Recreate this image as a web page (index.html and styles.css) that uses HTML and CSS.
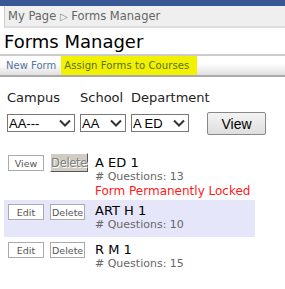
FILE: index.html
```html
<!DOCTYPE html>
<html lang="en">
<head>
    <meta charset="UTF-8">
    <title>Forms Manager</title>
    <link rel="stylesheet" href="styles.css">
</head>
<body>

    <div class="topbar"></div>

    <div class="breadcrumb">
        <a href="#">My Page</a> <span class="sep">&#9655;</span> <a href="#">Forms Manager</a>
    </div>

    <h1 class="title">Forms Manager</h1>

    <div class="tabs">
        <a class="tab" href="#">New Form</a>
        <a class="tab tab-marked" href="#">Assign Forms to Courses</a>
    </div>

    <form class="filters">
        <label for="campus">Campus</label>
        <label for="school">School</label>
        <label for="dept">Department</label>
        <span></span>
        <select id="campus"><option>AA---</option></select>
        <select id="school"><option>AA</option></select>
        <select id="dept"><option>A ED</option></select>
        <button type="button" class="view-btn">View</button>
    </form>

    <table class="forms">
        <tr class="first">
            <td class="actions">
                <button class="small-btn">View</button>
                <button class="locked-btn" disabled>Delete</button>
            </td>
            <td class="info">
                <div class="form-name">A ED 1</div>
                <div class="count"># Questions: 13</div>
                <div class="locked">Form Permanently Locked</div>
            </td>
        </tr>
        <tr class="alt">
            <td class="actions">
                <button class="small-btn">Edit</button>
                <button class="small-btn">Delete</button>
            </td>
            <td class="info">
                <div class="form-name">ART H 1</div>
                <div class="count"># Questions: 10</div>
            </td>
        </tr>
        <tr class="last">
            <td class="actions">
                <button class="small-btn">Edit</button>
                <button class="small-btn">Delete</button>
            </td>
            <td class="info">
                <div class="form-name">R M 1</div>
                <div class="count"># Questions: 15</div>
            </td>
        </tr>
    </table>

</body>
</html>
```

FILE: styles.css
```css
body {
    margin: 0;
    font-family: "DejaVu Sans", Verdana, sans-serif;
    background-color: #fff;
    color: #000;
}

a {
    text-decoration: none;
}

.topbar {
    height: 6px;
    background-color: #3a5795;
}

.breadcrumb {
    margin-left: 4px;
    height: 20px;
    padding-left: 3px;
    border-left: 1px solid #ccc;
    border-bottom: 2px solid #ddd;
    background-color: #efefef;
    font-size: 11.5px;
    line-height: 21px;
    color: #777;
}

.breadcrumb a {
    color: #666;
}

.sep {
    font-size: 10px;
    color: #888;
}

.title {
    margin: 2px 0 0 4px;
    height: 24px;
    font-size: 18px;
    font-weight: normal;
    line-height: 24px;
}

.tabs {
    display: flex;
    height: 19px;
    border-top: 2px solid #ccc;
    border-bottom: 2px solid #aaa;
    background: linear-gradient(#fff, #fff 40%, #e0e0e0);
    font-size: 10px;
    line-height: 20px;
}

.tab {
    padding: 0 4px 0 6px;
    color: #52729e;
}

.tab-marked {
    margin-left: 1px;
    padding: 0 8px 0 3px;
    background-color: #f2f200;
    color: #55701e;
    letter-spacing: 0.1px;
}

.filters {
    display: grid;
    grid-template-columns: 68px 46px 58px auto;
    column-gap: 5px;
    row-gap: 6px;
    justify-content: start;
    align-items: end;
    margin: 13px 0 0 7px;
}

.filters label {
    white-space: nowrap;
    font-size: 13px;
    line-height: 16px;
    color: #222;
}

select {
    height: 18px;
    padding: 0 0 0 1px;
    border: 1px solid #777;
    border-radius: 0;
    background: #fff url("data:image/svg+xml,%3Csvg xmlns='http://www.w3.org/2000/svg' width='12' height='8'%3E%3Cpath d='M1 1.5 6 6.5 11 1.5' fill='none' stroke='%23333' stroke-width='2'/%3E%3C/svg%3E") no-repeat right 3px center;
    appearance: none;
    font-family: "Liberation Sans", Arial, sans-serif;
    font-size: 13px;
    color: #000;
}

.view-btn {
    width: 59px;
    height: 23px;
    margin: 0 0 -3px 13px;
    border: 1px solid #888;
    border-radius: 2px;
    background: linear-gradient(#f4f4f4, #dedede);
    font-family: "Liberation Sans", Arial, sans-serif;
    font-size: 14px;
    color: #000;
}

.forms {
    margin: 20px 0 0 4px;
    border-collapse: collapse;
    table-layout: fixed;
    width: 251px;
}

.forms td {
    padding: 0;
    vertical-align: top;
}

.forms tr.alt {
    background-color: #e6e6fa;
}

.forms td.actions {
    width: 87px;
    padding: 3px 0 0 4px;
    white-space: nowrap;
}

.alt td.actions {
    padding-top: 4px;
}

.last td.actions {
    padding-top: 5px;
}

.forms td.info {
    padding: 3px 0 5px 0;
}

.first td.info {
    padding-bottom: 2px;
}

.last td.info {
    padding-top: 5px;
}

.small-btn {
    width: 36px;
    height: 16px;
    margin-right: 1px;
    padding: 0;
    border: 1px solid #aaa;
    background-color: #fff;
    font-family: "DejaVu Sans", Verdana, sans-serif;
    font-size: 9.5px;
    color: #555;
    vertical-align: top;
}

.small-btn + .small-btn {
    width: 35px;
}

.locked-btn {
    width: 38px;
    height: 19px;
    margin-top: -2px;
    padding: 0;
    border: 1px solid;
    border-color: #fff #555 #555 #fff;
    background-color: #d0ccc4;
    font-family: "DejaVu Sans", Verdana, sans-serif;
    font-size: 11.5px;
    letter-spacing: -0.3px;
    color: #808080;
    text-shadow: 1px 1px 0 #fff;
    vertical-align: top;
}

.form-name {
    font-size: 13px;
    line-height: 15px;
}

.count {
    font-size: 11px;
    line-height: 14px;
    color: #666;
}

.locked {
    font-size: 12px;
    line-height: 14px;
    color: #ff1a1a;
}
```
